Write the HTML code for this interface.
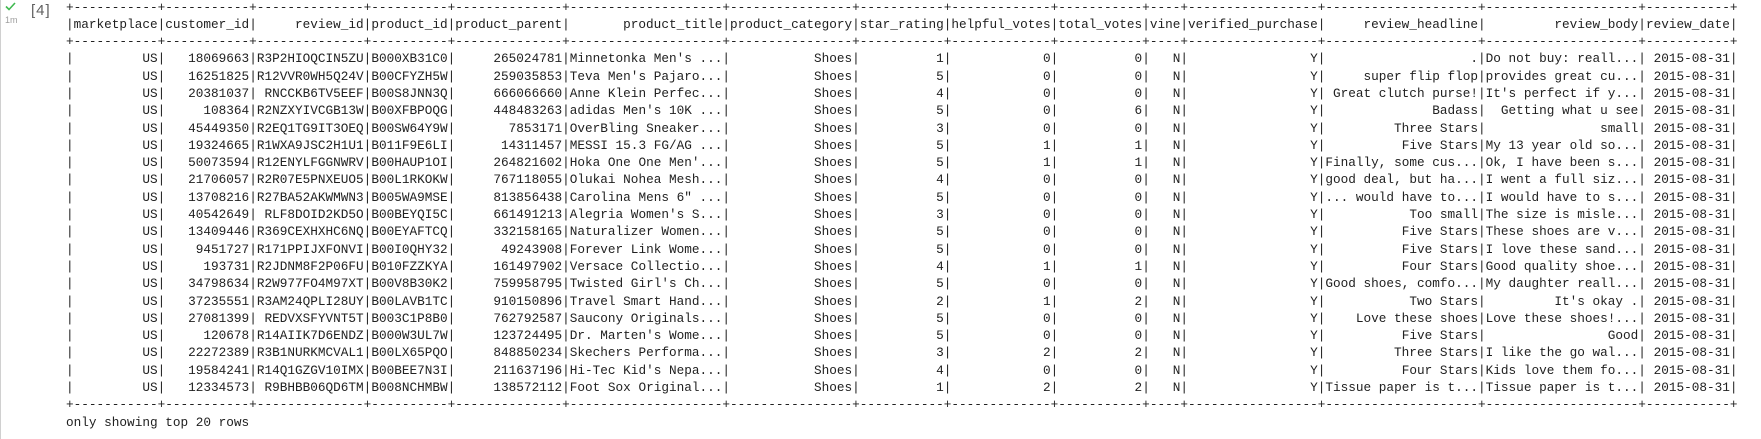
<!DOCTYPE html>
<html><head><meta charset="utf-8"><style>
html,body{margin:0;padding:0;background:#fff;width:1761px;height:439px;overflow:hidden;position:relative}
.lb{position:absolute;left:0;top:0;width:1px;height:439px;background:#d0d0d0}
.chk{position:absolute;left:5px;top:2px}
.tm{position:absolute;left:5px;top:15px;font:9px "Liberation Sans",sans-serif;color:#9e9e9e}
.ec{position:absolute;left:31px;top:2px;font:15px "Liberation Sans",sans-serif;color:#616161;letter-spacing:1px}
.out{position:absolute;left:66px;top:-1.5px;font-family:"Liberation Mono",monospace;font-size:12.72px;color:#212121;white-space:normal}
.out div{height:17.3px;line-height:17.3px;white-space:pre}
.out i{font-style:normal;display:inline-block;text-align:right;vertical-align:top;white-space:pre}
.r i:nth-child(1){width:11ch}.r i:nth-child(2){width:11ch}.r i:nth-child(3){width:14ch}.r i:nth-child(4){width:10ch}
.r i:nth-child(5){width:14ch}.r i:nth-child(6){width:20ch}.r i:nth-child(7){width:16ch}.r i:nth-child(8){width:11ch}
.r i:nth-child(9){width:13ch}.r i:nth-child(10){width:11ch}.r i:nth-child(11){width:4ch}.r i:nth-child(12){width:17ch}
.r i:nth-child(13){width:20ch}.r i:nth-child(14){width:20ch}.r i:nth-child(15){width:11ch}
</style></head><body>
<div class="lb"></div>
<svg class="chk" width="11" height="9" viewBox="0 0 11 9"><path d="M1 4.5 L4 7.5 L10 1" fill="none" stroke="#3fb950" stroke-width="1.6"/></svg>
<div class="tm">1m</div>
<div class="ec">[4]</div>
<div class="out"><div>+-----------+-----------+--------------+----------+--------------+--------------------+----------------+-----------+-------------+-----------+----+-----------------+--------------------+--------------------+-----------+</div><div class="r">|<i>marketplace</i>|<i>customer_id</i>|<i>review_id</i>|<i>product_id</i>|<i>product_parent</i>|<i>product_title</i>|<i>product_category</i>|<i>star_rating</i>|<i>helpful_votes</i>|<i>total_votes</i>|<i>vine</i>|<i>verified_purchase</i>|<i>review_headline</i>|<i>review_body</i>|<i>review_date</i>|</div><div>+-----------+-----------+--------------+----------+--------------+--------------------+----------------+-----------+-------------+-----------+----+-----------------+--------------------+--------------------+-----------+</div><div class="r">|<i>US</i>|<i>18069663</i>|<i>R3P2HIOQCIN5ZU</i>|<i>B000XB31C0</i>|<i>265024781</i>|<i>Minnetonka Men's ...</i>|<i>Shoes</i>|<i>1</i>|<i>0</i>|<i>0</i>|<i>N</i>|<i>Y</i>|<i>.</i>|<i>Do not buy: reall...</i>|<i>2015-08-31</i>|</div><div class="r">|<i>US</i>|<i>16251825</i>|<i>R12VVR0WH5Q24V</i>|<i>B00CFYZH5W</i>|<i>259035853</i>|<i>Teva Men's Pajaro...</i>|<i>Shoes</i>|<i>5</i>|<i>0</i>|<i>0</i>|<i>N</i>|<i>Y</i>|<i>super flip flop</i>|<i>provides great cu...</i>|<i>2015-08-31</i>|</div><div class="r">|<i>US</i>|<i>20381037</i>|<i>RNCCKB6TV5EEF</i>|<i>B00S8JNN3Q</i>|<i>666066660</i>|<i>Anne Klein Perfec...</i>|<i>Shoes</i>|<i>4</i>|<i>0</i>|<i>0</i>|<i>N</i>|<i>Y</i>|<i>Great clutch purse!</i>|<i>It's perfect if y...</i>|<i>2015-08-31</i>|</div><div class="r">|<i>US</i>|<i>108364</i>|<i>R2NZXYIVCGB13W</i>|<i>B00XFBPOQG</i>|<i>448483263</i>|<i>adidas Men's 10K ...</i>|<i>Shoes</i>|<i>5</i>|<i>0</i>|<i>6</i>|<i>N</i>|<i>Y</i>|<i>Badass</i>|<i>Getting what u see</i>|<i>2015-08-31</i>|</div><div class="r">|<i>US</i>|<i>45449350</i>|<i>R2EQ1TG9IT3OEQ</i>|<i>B00SW64Y9W</i>|<i>7853171</i>|<i>OverBling Sneaker...</i>|<i>Shoes</i>|<i>3</i>|<i>0</i>|<i>0</i>|<i>N</i>|<i>Y</i>|<i>Three Stars</i>|<i>small</i>|<i>2015-08-31</i>|</div><div class="r">|<i>US</i>|<i>19324665</i>|<i>R1WXA9JSC2H1U1</i>|<i>B011F9E6LI</i>|<i>14311457</i>|<i>MESSI 15.3 FG/AG ...</i>|<i>Shoes</i>|<i>5</i>|<i>1</i>|<i>1</i>|<i>N</i>|<i>Y</i>|<i>Five Stars</i>|<i>My 13 year old so...</i>|<i>2015-08-31</i>|</div><div class="r">|<i>US</i>|<i>50073594</i>|<i>R12ENYLFGGNWRV</i>|<i>B00HAUP1OI</i>|<i>264821602</i>|<i>Hoka One One Men'...</i>|<i>Shoes</i>|<i>5</i>|<i>1</i>|<i>1</i>|<i>N</i>|<i>Y</i>|<i>Finally, some cus...</i>|<i>Ok, I have been s...</i>|<i>2015-08-31</i>|</div><div class="r">|<i>US</i>|<i>21706057</i>|<i>R2R07E5PNXEUO5</i>|<i>B00L1RKOKW</i>|<i>767118055</i>|<i>Olukai Nohea Mesh...</i>|<i>Shoes</i>|<i>4</i>|<i>0</i>|<i>0</i>|<i>N</i>|<i>Y</i>|<i>good deal, but ha...</i>|<i>I went a full siz...</i>|<i>2015-08-31</i>|</div><div class="r">|<i>US</i>|<i>13708216</i>|<i>R27BA52AKWMWN3</i>|<i>B005WA9MSE</i>|<i>813856438</i>|<i>Carolina Mens 6" ...</i>|<i>Shoes</i>|<i>5</i>|<i>0</i>|<i>0</i>|<i>N</i>|<i>Y</i>|<i>... would have to...</i>|<i>I would have to s...</i>|<i>2015-08-31</i>|</div><div class="r">|<i>US</i>|<i>40542649</i>|<i>RLF8DOID2KD5O</i>|<i>B00BEYQI5C</i>|<i>661491213</i>|<i>Alegria Women's S...</i>|<i>Shoes</i>|<i>3</i>|<i>0</i>|<i>0</i>|<i>N</i>|<i>Y</i>|<i>Too small</i>|<i>The size is misle...</i>|<i>2015-08-31</i>|</div><div class="r">|<i>US</i>|<i>13409446</i>|<i>R369CEXHXHC6NQ</i>|<i>B00EYAFTCQ</i>|<i>332158165</i>|<i>Naturalizer Women...</i>|<i>Shoes</i>|<i>5</i>|<i>0</i>|<i>0</i>|<i>N</i>|<i>Y</i>|<i>Five Stars</i>|<i>These shoes are v...</i>|<i>2015-08-31</i>|</div><div class="r">|<i>US</i>|<i>9451727</i>|<i>R171PPIJXFONVI</i>|<i>B00I0QHY32</i>|<i>49243908</i>|<i>Forever Link Wome...</i>|<i>Shoes</i>|<i>5</i>|<i>0</i>|<i>0</i>|<i>N</i>|<i>Y</i>|<i>Five Stars</i>|<i>I love these sand...</i>|<i>2015-08-31</i>|</div><div class="r">|<i>US</i>|<i>193731</i>|<i>R2JDNM8F2P06FU</i>|<i>B010FZZKYA</i>|<i>161497902</i>|<i>Versace Collectio...</i>|<i>Shoes</i>|<i>4</i>|<i>1</i>|<i>1</i>|<i>N</i>|<i>Y</i>|<i>Four Stars</i>|<i>Good quality shoe...</i>|<i>2015-08-31</i>|</div><div class="r">|<i>US</i>|<i>34798634</i>|<i>R2W977FO4M97XT</i>|<i>B00V8B30K2</i>|<i>759958795</i>|<i>Twisted Girl's Ch...</i>|<i>Shoes</i>|<i>5</i>|<i>0</i>|<i>0</i>|<i>N</i>|<i>Y</i>|<i>Good shoes, comfo...</i>|<i>My daughter reall...</i>|<i>2015-08-31</i>|</div><div class="r">|<i>US</i>|<i>37235551</i>|<i>R3AM24QPLI28UY</i>|<i>B00LAVB1TC</i>|<i>910150896</i>|<i>Travel Smart Hand...</i>|<i>Shoes</i>|<i>2</i>|<i>1</i>|<i>2</i>|<i>N</i>|<i>Y</i>|<i>Two Stars</i>|<i>It's okay .</i>|<i>2015-08-31</i>|</div><div class="r">|<i>US</i>|<i>27081399</i>|<i>REDVXSFYVNT5T</i>|<i>B003C1P8B0</i>|<i>762792587</i>|<i>Saucony Originals...</i>|<i>Shoes</i>|<i>5</i>|<i>0</i>|<i>0</i>|<i>N</i>|<i>Y</i>|<i>Love these shoes</i>|<i>Love these shoes!...</i>|<i>2015-08-31</i>|</div><div class="r">|<i>US</i>|<i>120678</i>|<i>R14AIIK7D6ENDZ</i>|<i>B000W3UL7W</i>|<i>123724495</i>|<i>Dr. Marten's Wome...</i>|<i>Shoes</i>|<i>5</i>|<i>0</i>|<i>0</i>|<i>N</i>|<i>Y</i>|<i>Five Stars</i>|<i>Good</i>|<i>2015-08-31</i>|</div><div class="r">|<i>US</i>|<i>22272389</i>|<i>R3B1NURKMCVAL1</i>|<i>B00LX65PQO</i>|<i>848850234</i>|<i>Skechers Performa...</i>|<i>Shoes</i>|<i>3</i>|<i>2</i>|<i>2</i>|<i>N</i>|<i>Y</i>|<i>Three Stars</i>|<i>I like the go wal...</i>|<i>2015-08-31</i>|</div><div class="r">|<i>US</i>|<i>19584241</i>|<i>R14Q1GZGV10IMX</i>|<i>B00BEE7N3I</i>|<i>211637196</i>|<i>Hi-Tec Kid's Nepa...</i>|<i>Shoes</i>|<i>4</i>|<i>0</i>|<i>0</i>|<i>N</i>|<i>Y</i>|<i>Four Stars</i>|<i>Kids love them fo...</i>|<i>2015-08-31</i>|</div><div class="r">|<i>US</i>|<i>12334573</i>|<i>R9BHBB06QD6TM</i>|<i>B008NCHMBW</i>|<i>138572112</i>|<i>Foot Sox Original...</i>|<i>Shoes</i>|<i>1</i>|<i>2</i>|<i>2</i>|<i>N</i>|<i>Y</i>|<i>Tissue paper is t...</i>|<i>Tissue paper is t...</i>|<i>2015-08-31</i>|</div><div>+-----------+-----------+--------------+----------+--------------+--------------------+----------------+-----------+-------------+-----------+----+-----------------+--------------------+--------------------+-----------+</div><div>only showing top 20 rows</div></div>
</body></html>
